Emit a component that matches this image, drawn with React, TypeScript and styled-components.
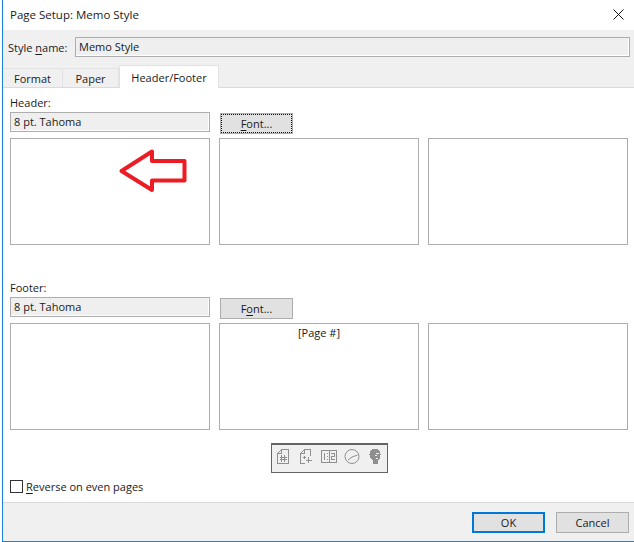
import { FC, ReactNode } from "react";
import styled, { createGlobalStyle } from "styled-components";

const GlobalStyle = createGlobalStyle`
  html, body {
    margin: 0;
    padding: 0;
    background: #fff;
  }
`;

const Dialog = styled.div`
  box-sizing: border-box;
  width: 632px;
  height: 542px;
  margin-left: 2px;
  border-left: 1px solid #1883d7;
  border-bottom: 1px solid #1883d7;
  display: flex;
  flex-direction: column;
  font-family: "Open Sans", "Noto Sans", sans-serif;
  font-size: 11px;
  color: #1a1a1a;
  background: #fff;
`;

const TitleBar = styled.div`
  box-sizing: border-box;
  height: 30px;
  display: flex;
  align-items: center;
  justify-content: space-between;
  padding: 0 10px 1px 7px;
  font-size: 11.5px;
`;

const CloseIcon = styled.svg`
  width: 11px;
  height: 11px;
  display: block;
`;

const TopStrip = styled.div`
  height: 58px;
  background: #f0f0f0;
  border-bottom: 1px solid #dadada;
  box-sizing: border-box;
  display: flex;
  flex-direction: column;
  justify-content: space-between;
`;

const NameRow = styled.div`
  display: flex;
  align-items: center;
  padding: 7px 0 0 5px;
`;

const NameLabel = styled.span`
  width: 67px;
  white-space: nowrap;
`;

const NameInput = styled.div`
  box-sizing: border-box;
  width: 555px;
  height: 20px;
  border: 1px solid #adadad;
  background: #efefef;
  box-shadow: inset -1px -1px 0 #fff;
  padding-left: 3px;
  line-height: 17px;
`;

const Tabs = styled.div`
  display: flex;
  align-items: flex-end;
`;

const Tab = styled.div<{ $active?: boolean; $width: number }>`
  box-sizing: border-box;
  width: ${(p) => p.$width}px;
  height: ${(p) => (p.$active ? 23 : 19)}px;
  margin-bottom: ${(p) => (p.$active ? -1 : 0)}px;
  background: ${(p) => (p.$active ? "#fff" : "#f0f0f0")};
  border: 1px solid #e2e2e2;
  border-bottom: none;
  border-left: ${(p) => (p.$active ? "1px solid #e2e2e2" : "none")};
  text-align: center;
  line-height: ${(p) => (p.$active ? 23 : 19)}px;
  position: relative;
  z-index: ${(p) => (p.$active ? 1 : 0)};
`;

const Content = styled.div`
  flex: 1;
  display: flex;
  flex-direction: column;
  padding: 0 0 0 7px;
`;

const Section = styled.section`
  display: flex;
  flex-direction: column;
`;

const HeaderSection = styled(Section)`
  margin-top: 7px;
`;

const FooterSection = styled(Section)`
  margin-top: 35px;
`;

const SectionLabel = styled.div`
  height: 17px;
  line-height: 16px;
`;

const FontRow = styled.div`
  display: flex;
  align-items: flex-start;
  gap: 10px;
`;

const FontField = styled.div`
  box-sizing: border-box;
  width: 200px;
  height: 20px;
  border: 1px solid #adadad;
  background: #efefef;
  box-shadow: inset -1px -1px 0 #fff;
  padding-left: 3px;
  line-height: 17px;
`;

const FontButton = styled.button<{ $focused?: boolean }>`
  box-sizing: border-box;
  width: 73px;
  height: 21px;
  margin-top: 1px;
  padding: 0;
  border: 1px solid #adadad;
  background: #e1e1e1;
  font: inherit;
  color: inherit;
  outline: ${(p) => (p.$focused ? "1px dotted #111" : "none")};
  outline-offset: -2px;
`;

const BoxRow = styled.div`
  display: flex;
  gap: 9px;
  margin-top: 4px;
`;

const TextBox = styled.div`
  position: relative;
  box-sizing: border-box;
  width: 200px;
  height: 107px;
  border: 1px solid #adadad;
  background: #fff;
  text-align: center;
  line-height: 18px;
`;

const ArrowMark = styled.svg`
  position: absolute;
  left: 106px;
  top: 9px;
  width: 70px;
  height: 48px;
`;

const ToolbarRow = styled.div`
  display: flex;
  margin-top: 13px;
  padding-left: 261px;
`;

const Toolbar = styled.div`
  box-sizing: border-box;
  width: 117px;
  height: 30px;
  border: 1px solid #646464;
  border-top-width: 2px;
  background: #f0f0f0;
  display: flex;
  align-items: flex-start;
  gap: 3px;
  padding: 4px 0 0 1px;
`;

const ToolIcon = styled.svg`
  width: 20px;
  height: 16px;
  display: block;
  fill: none;
  stroke: #8f8f8f;
  stroke-width: 1;
  shape-rendering: crispEdges;
`;

const ClockIcon = styled(ToolIcon)`
  shape-rendering: auto;
`;

const CheckRow = styled.label`
  display: flex;
  align-items: center;
  gap: 3px;
  margin-top: 6px;
  height: 14px;
`;

const CheckBox = styled.span`
  box-sizing: border-box;
  width: 13px;
  height: 13px;
  border: 1px solid #333;
  background: #fff;
`;

const ButtonStrip = styled.div`
  box-sizing: border-box;
  height: 39px;
  margin-top: auto;
  background: #f0f0f0;
  border-top: 1px solid #dadada;
  display: flex;
  justify-content: flex-end;
  gap: 11px;
  padding: 9px 5px 0 0;
`;

const DialogButton = styled.button<{ $primary?: boolean }>`
  box-sizing: border-box;
  width: 73px;
  height: 21px;
  padding: 0;
  border: ${(p) => (p.$primary ? "2px solid #0078d7" : "1px solid #adadad")};
  background: #e1e1e1;
  font: inherit;
  color: inherit;
`;

const Key = styled.span`
  text-decoration: underline;
  text-underline-offset: 2px;
`;

const Arrow = () => (
  <ArrowMark viewBox="0 0 70 48">
    <path
      d="M4.5 23 L35 3.5 V13 H67.5 V32.5 H35 V42 Z"
      fill="none"
      stroke="#ed1c24"
      strokeWidth="4"
      strokeLinejoin="round"
    />
  </ArrowMark>
);

const BoxTriple: FC<{ children?: ReactNode; mark?: boolean }> = ({
  children,
  mark,
}) => (
  <BoxRow>
    <TextBox>{mark && <Arrow />}</TextBox>
    <TextBox>{children}</TextBox>
    <TextBox />
  </BoxRow>
);

const App: FC = () => {
  return (
    <>
      <GlobalStyle />
      <Dialog>
        <TitleBar>
          <span>Page Setup: Memo Style</span>
          <CloseIcon viewBox="0 0 11 11">
            <path d="M0.5 0.5 L10.5 10.5 M10.5 0.5 L0.5 10.5" stroke="#111" fill="none" />
          </CloseIcon>
        </TitleBar>
        <TopStrip>
          <NameRow>
            <NameLabel>
              Style <Key>n</Key>ame:
            </NameLabel>
            <NameInput>Memo Style</NameInput>
          </NameRow>
          <Tabs>
            <Tab $width={60}>Format</Tab>
            <Tab $width={56}>Paper</Tab>
            <Tab $active $width={100}>
              Header/Footer
            </Tab>
          </Tabs>
        </TopStrip>
        <Content>
          <HeaderSection>
            <SectionLabel>Header:</SectionLabel>
            <FontRow>
              <FontField>8 pt. Tahoma</FontField>
              <FontButton $focused>
                <Key>F</Key>ont...
              </FontButton>
            </FontRow>
            <BoxTriple mark />
          </HeaderSection>
          <FooterSection>
            <SectionLabel>Footer:</SectionLabel>
            <FontRow>
              <FontField>8 pt. Tahoma</FontField>
              <FontButton>
                F<Key>o</Key>nt...
              </FontButton>
            </FontRow>
            <BoxTriple>[Page #]</BoxTriple>
          </FooterSection>
          <ToolbarRow>
            <Toolbar>
              <ToolIcon viewBox="0 0 20 16">
                <path d="M8.5 0.5 H15.5 V14.5 H4.5 V4.5 L8.5 0.5 V4.5 H4.5" />
                <path d="M8.5 6 V13 M11.5 6 V13 M6.5 8.5 H13.5 M6.5 10.5 H13.5" />
              </ToolIcon>
              <ToolIcon viewBox="0 0 20 16">
                <path d="M8.5 0.5 H14.5 V7 M8.5 0.5 L4.5 4.5 H8.5 V0.5 M4.5 4.5 V14.5 H9" />
                <path d="M12.5 8 V14 M9.5 11 H15.5 M8.5 6.5 V9.5 M7 8 H10" />
              </ToolIcon>
              <ToolIcon viewBox="0 0 20 16">
                <path d="M2.5 1.5 H17.5 V13.5 H2.5 Z M10 1.5 V13.5" />
                <path d="M5.5 4 V11 M7.5 4.5 H8.5 M7.5 7.5 H8.5 M7.5 10.5 H8.5 M12 4.5 H15.5 V7.5 H12 V10.5 H15.5" />
              </ToolIcon>
              <ClockIcon viewBox="0 0 20 16">
                <circle cx="10" cy="7.5" r="7" />
                <path d="M10 8 L15.5 6 M10 8 L6 11" />
              </ClockIcon>
              <ToolIcon viewBox="0 0 20 16">
                <path
                  d="M8 0.5 H12 L14 2.5 L15 5.5 L14 7.5 V10 L12 11 V14 H8 V11 L6 9 L5 5.5 L6 2.5 Z"
                  fill="#8f8f8f"
                />
                <path d="M11 4.5 H14 M10 6.5 H12 M11 9.5 H13" stroke="#f0f0f0" />
              </ToolIcon>
            </Toolbar>
          </ToolbarRow>
          <CheckRow>
            <CheckBox />
            <span>
              <Key>R</Key>everse on even pages
            </span>
          </CheckRow>
        </Content>
        <ButtonStrip>
          <DialogButton $primary>OK</DialogButton>
          <DialogButton>Cancel</DialogButton>
        </ButtonStrip>
      </Dialog>
    </>
  );
};

export default App;
